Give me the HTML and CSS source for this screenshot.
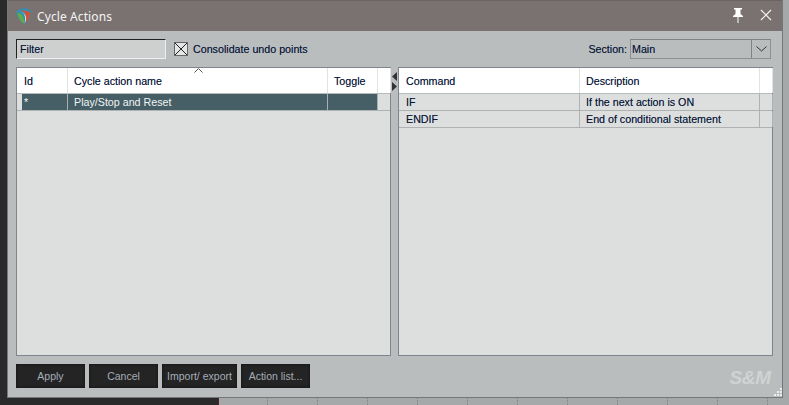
FILE: index.html
```html
<!DOCTYPE html>
<html lang="en">
<head>
<meta charset="utf-8">
<title>Cycle Actions</title>
<link rel="stylesheet" href="styles.css">
</head>
<body>
<div class="desktop">
  <div class="back-panel"></div>
  <div class="window">
    <header class="titlebar">
      <svg class="logo" width="16" height="16" viewBox="0 0 16 16">
        <path d="M0.500 3.500 C3 1 5.500 0.500 8 0.500 C10.500 0.500 13.500 1 15.500 3.500 C15.500 8 13 12 8.500 15.500 L7 15.500 C3 12 0.500 8 0.500 3.500Z" fill="#2f8fb5"/>
        <path d="M1.500 4.500 C2 10 4.500 13.500 8 15.500 C8.500 10 6.500 5.500 1.500 4.500Z" fill="#5fae45"/>
        <path d="M4 3 C9 2.500 11.500 8 9 15 C12.500 12.500 14.500 8 14.800 5 C12 2.500 7.500 2 4 3Z" fill="#c9553c"/>
        <path d="M3.500 3 C8 4 10.500 8.500 8.500 15.500 C11 12 11.500 5.500 3.500 3Z" fill="#ece9e0"/>
      </svg>
      <span class="title">Cycle Actions</span>
      <svg class="pin" width="14" height="16" viewBox="0 0 14 16">
        <path d="M3 1H11V2.500H9.500V7L12 9V10H2V9L4.500 7V2.500H3Z M6.500 10H7.500V16H6.500Z" fill="#fff"/>
      </svg>
      <svg class="close" width="12" height="12" viewBox="0 0 12 12">
        <path d="M1 1L11 11M11 1L1 11" stroke="#f4f4f4" stroke-width="1.200" fill="none"/>
      </svg>
    </header>
    <div class="content">
      <div class="toolbar">
        <div class="filter">Filter</div>
        <span class="check"><svg width="13" height="13" viewBox="0 0 13 13"><path d="M0 0L13 13M13 0L0 13" stroke="#111" stroke-width="1" fill="none"/></svg></span>
        <span class="check-label">Consolidate undo points</span>
        <span class="section-label">Section:</span>
        <div class="select">
          <span class="select-value">Main</span>
          <span class="select-arrow"><svg width="11" height="6" viewBox="0 0 11 6"><path d="M0.500 0.500L5.500 5L10.500 0.500" stroke="#333" fill="none"/></svg></span>
        </div>
      </div>
      <div class="panes">
        <section class="pane">
          <div class="row left-cols head">
            <span class="cell">Id</span><span class="cell sorted">Cycle action name<svg class="caret" width="9" height="5" viewBox="0 0 9 5"><path d="M0.500 4.500L4.500 0.500L8.500 4.500" stroke="#555" fill="none"/></svg></span><span class="cell">Toggle</span><span class="cell"></span>
          </div>
          <div class="selected-wrap">
            <div class="row selected">
              <span class="cell">*</span><span class="cell">Play/Stop and Reset</span><span class="cell"></span>
            </div>
          </div>
        </section>
        <div class="splitter">
          <svg width="7" height="24" viewBox="0 0 7 24"><path d="M6 4V13L1 8.500Z M1 14V23L6 18.500Z" fill="#333"/></svg>
        </div>
        <section class="pane">
          <div class="row right-cols head">
            <span class="cell">Command</span><span class="cell">Description</span><span class="cell"></span>
          </div>
          <div class="row right-cols body-row">
            <span class="cell">IF</span><span class="cell">If the next action is ON</span><span class="cell"></span>
          </div>
          <div class="row right-cols body-row">
            <span class="cell">ENDIF</span><span class="cell">End of conditional statement</span><span class="cell"></span>
          </div>
        </section>
      </div>
      <footer class="footer">
        <button class="btn btn-a">Apply</button>
        <button class="btn btn-a">Cancel</button>
        <button class="btn btn-b">Import/ export</button>
        <button class="btn btn-a">Action list...</button>
        <span class="brand">S&amp;M</span>
      </footer>
      <svg class="grip" width="9" height="9" viewBox="0 0 9 9"><path d="M7 0h2v2H7z M4 3h2v2H4z M7 3h2v2H7z M1 6h2v2H1z M4 6h2v2H4z M7 6h2v2H7z" fill="#eee"/></svg>
    </div>
  </div>
</div>
</body>
</html>
```
FILE: styles.css
```css
* { box-sizing: border-box; }
html, body { margin: 0; padding: 0; }
body { width: 789px; height: 405px; overflow: hidden; font-family: "Liberation Sans", Arial, sans-serif; font-size: 10.7px; color: #0a1430; text-shadow: 0 0 0.6px rgba(20, 50, 120, 0.55); }
.desktop { position: relative; width: 789px; height: 405px; background: #2a2a2a; }
.back-panel {
  position: absolute; left: 218px; top: 0; right: 0; bottom: 0;
  background-color: #a6a9a9;
  border-left: 1px solid #5a2020;
}
.back-panel::after {
  content: ""; position: absolute; inset: 0;
  background-image: repeating-linear-gradient(90deg, transparent 0 48px, #7f8282 48px 49px, transparent 49px 50px);
  -webkit-mask-image: repeating-linear-gradient(180deg, #000 0 1px, transparent 1px 2px);
  mask-image: repeating-linear-gradient(180deg, #000 0 1px, transparent 1px 2px);
}
.window {
  position: absolute; left: 8px; top: 0; width: 774px; height: 397px;
  display: flex; flex-direction: column;
  background: #b9bdbd;
  box-shadow: 0 0 0 1px #757878;
}
.titlebar { height: 31px; flex: none; display: flex; align-items: center; background: #7a7270; border-top: 1px solid #6a6462; color: #f4f4f4; padding-left: 8px; text-shadow: none; }
.logo { flex: none; }
.title { margin-left: 5px; font-family: "Noto Sans", sans-serif; font-size: 12px; letter-spacing: 0.1px; flex: 1; }
.pin { margin-right: 15px; margin-top: -2px; }
.close { margin-right: 10px; margin-top: -2px; }
.content { flex: 1; position: relative; display: flex; flex-direction: column; padding: 8px 9px 9px 8px; }
.toolbar { display: flex; align-items: center; height: 20px; padding-right: 2px; }
.filter { width: 150px; height: 20px; border: 1px solid #222; background: #cdd0cf; border-right-color: #eee; border-bottom-color: #eee; padding: 2px 3px; line-height: 15px; }
.check { margin-left: 8px; width: 14px; height: 14px; border: 1px solid #666; background: #e4e6e6; display: flex; align-items: center; justify-content: center; flex: none; }
.check svg { width: 12px; height: 12px; }
.check-label { margin-left: 5px; flex: 1; }
.section-label { margin-right: 3px; }
.select { width: 141px; height: 20px; display: flex; border: 1px solid #8c9090; border-top-color: #7f8383; background: #b9bdbd; }
.select-value { flex: 1; padding: 1px 1px; line-height: 16px; }
.select-arrow { width: 19px; border-left: 1px solid #7f8383; display: flex; align-items: center; justify-content: center; }
.panes { margin-top: 8px; height: 289px; display: flex; }
.pane { width: 375px; border: 1px solid #80848c; background: #dcdfde; display: flex; flex-direction: column; flex: none; }
.splitter { width: 7px; flex: none; padding-top: 1px; display: flex; align-items: flex-start; justify-content: center; }
.row { display: grid; flex: none; }
.left-cols { grid-template-columns: 51px 260px 50px 12px; }
.right-cols { grid-template-columns: 180px 180px 13px; }
.head { height: 26px; background: #fff; border-bottom: 1px solid #b6baba; }
.head .cell { border-right: 1px solid #e2e4e4; padding: 6px 6px 0 6px; line-height: 15px; position: relative; }
.left-cols.head .cell:first-child { padding-left: 7px; }
.right-cols.head { padding-left: 1px; }
.sorted .caret { position: absolute; left: 126px; top: 0; }
.body-row { height: 17px; border-bottom: 1px solid #aeb2b2; }
.body-row .cell { border-right: 1px solid #aeb2b2; padding: 0 6px; line-height: 16px; }
.right-cols.body-row { padding-left: 1px; }
.selected-wrap { height: 17px; flex: none; padding: 0 12px 0 5px; border-bottom: 1px solid #aeb2b2; }
.selected { background: #465f66; color: #f2f4f4; height: 16px; grid-template-columns: 46px 260px 50px; text-shadow: none; }
.selected .cell { border-right: 1px solid #a9b0b0; padding: 0 6px; line-height: 16px; }
.selected .cell:first-child { padding-left: 2px; }
.footer { margin-top: 8px; height: 24px; display: flex; align-items: stretch; gap: 4px; position: relative; }
.btn { height: 24px; border: 0; padding: 0; background: #242424; color: #a4adb8; font-family: "Liberation Sans", sans-serif; font-size: 10.5px; box-shadow: inset 0 0 3px #0f0f0f; }
.btn-a { width: 69px; }
.btn-b { width: 75px; }
.brand { position: absolute; right: 2px; top: 3px; font-family: "Liberation Sans", sans-serif; font-size: 19px; font-weight: 700; font-style: italic; color: #d0d3d3; letter-spacing: -0.2px; text-shadow: none; }
.grip { position: absolute; right: 0; bottom: 0; }
```
